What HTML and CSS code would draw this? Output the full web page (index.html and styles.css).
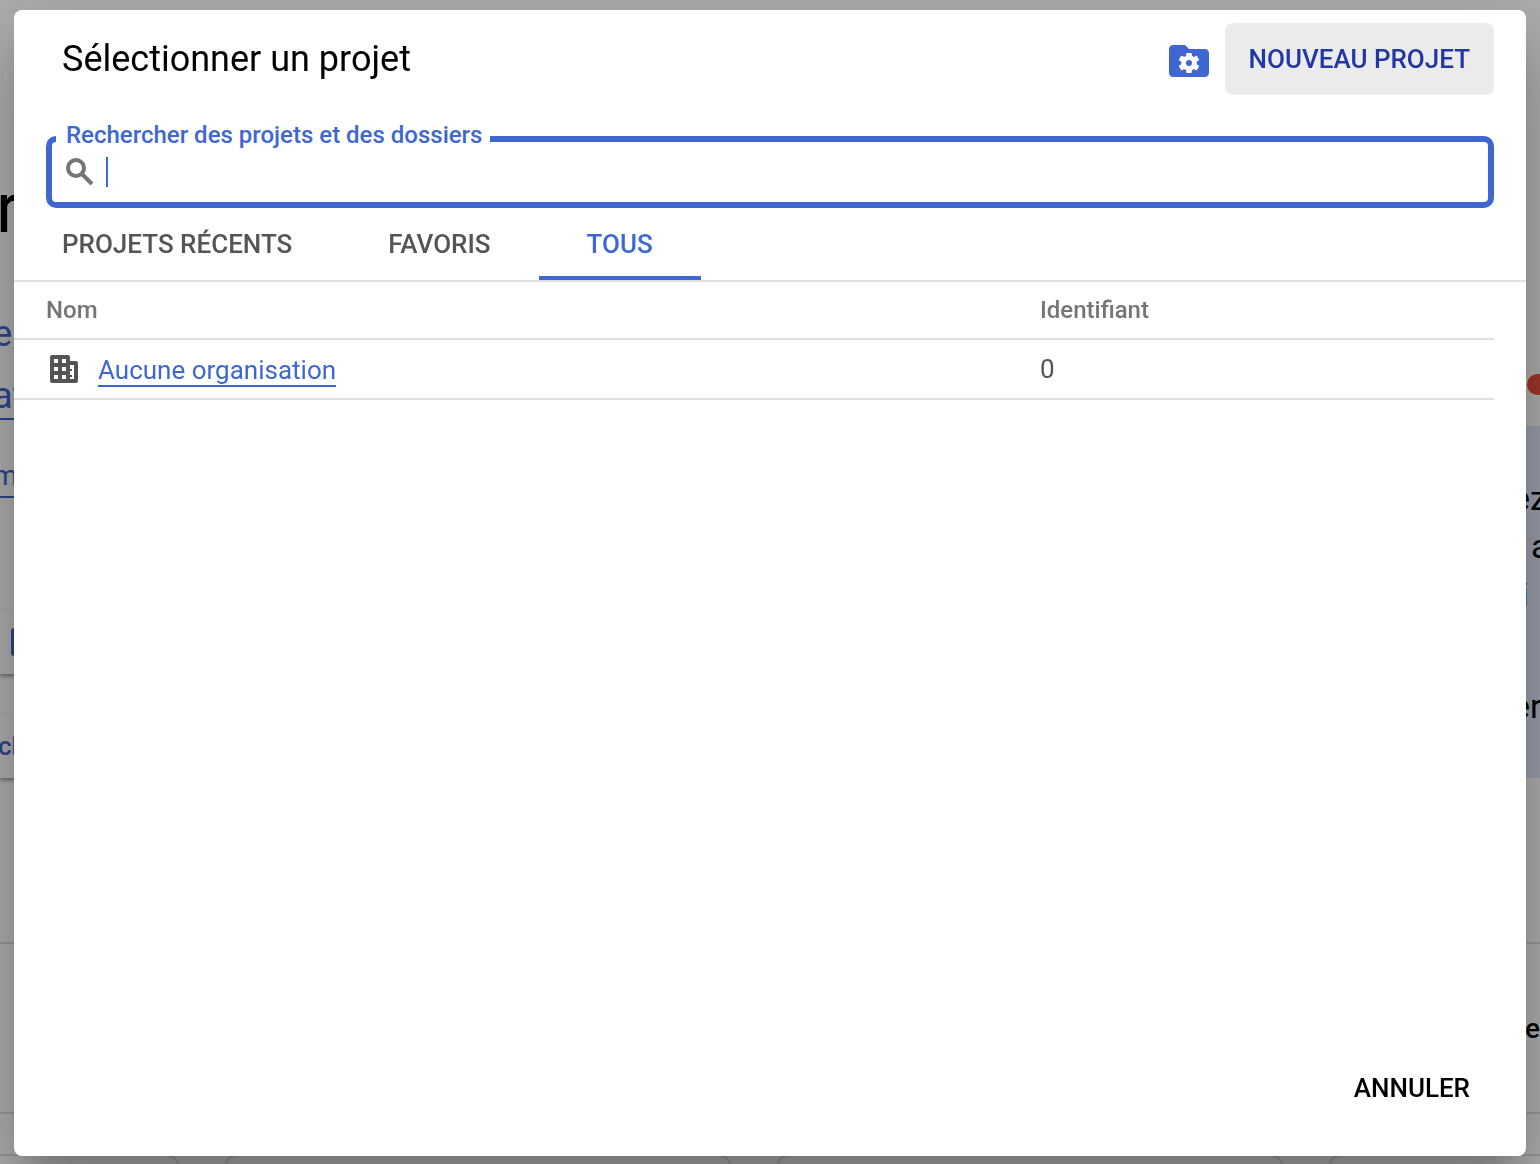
FILE: index.html
```html
<!DOCTYPE html>
<html lang="fr">
<head>
    <meta charset="UTF-8">
    <meta name="viewport" content="width=device-width, initial-scale=1.0">
    <title>Sélectionner un projet</title>
    <link rel="stylesheet" href="styles.css">
</head>
<body>
    <!-- Page behind the dialog -->
    <main class="page" aria-hidden="true">
        <section class="intro">
            <div class="intro-main">
                <p class="intro-title">r</p>
                <p class="intro-text">e</p>
                <p class="intro-text underlined">av</p>
                <p class="intro-small underlined">m</p>
                <div class="raised"><span class="raised-icon"></span></div>
                <div class="raised"><p>ch</p></div>
            </div>
            <div class="intro-side">
                <div class="dot"></div>
                <div class="notice">
                    <p>ez</p>
                    <p class="notice-word">a</p>
                    <p>&nbsp;i</p>
                    <p class="notice-last">er</p>
                </div>
            </div>
        </section>
        <section class="band">e</section>
        <section class="cards">
            <div class="card"></div>
            <div class="card"></div>
            <div class="card"></div>
            <div class="card"></div>
        </section>
    </main>

    <div class="backdrop">
        <div class="dialog" role="dialog" aria-labelledby="dialogTitle">
            <header class="dialog-header">
                <h1 id="dialogTitle">Sélectionner un projet</h1>
                <button type="button" class="icon-button" aria-label="Gérer les ressources">
                    <svg width="48" height="48" viewBox="0 0 24 24">
                        <path fill="#3f67d2" d="M20 6h-8l-2-2H4c-1.100 0-2 .9-2 2v12c0 1.100.9 2 2 2h16c1.100 0 2-.9 2-2V8c0-1.100-.9-2-2-2z"/>
                        <g fill="#fff" transform="translate(12 13)">
                            <circle r="3.900"/>
                            <rect x="-1.400" y="-5" width="2.800" height="10" rx=".4"/>
                            <rect x="-1.400" y="-5.200" width="2.800" height="10.400" rx=".4" transform="rotate(60)"/>
                            <rect x="-1.400" y="-5.200" width="2.800" height="10.400" rx=".4" transform="rotate(120)"/>
                        </g>
                        <circle cx="12" cy="13" r="1.500" fill="#3f67d2"/>
                    </svg>
                </button>
                <button type="button" class="button new-project">NOUVEAU PROJET</button>
            </header>

            <div class="search">
                <label for="search">Rechercher des projets et des dossiers</label>
                <svg width="28" height="28" viewBox="0 0 28 28" fill="none" stroke="#757575" stroke-width="4">
                    <circle cx="10" cy="10" r="8"/>
                    <path d="M15 15l11 11"/>
                </svg>
                <span class="caret"></span>
                <input type="text" id="search">
            </div>

            <div class="tabs" role="tablist">
                <button type="button" class="tab" role="tab">PROJETS RÉCENTS</button>
                <button type="button" class="tab" role="tab">FAVORIS</button>
                <button type="button" class="tab active" role="tab" aria-selected="true">TOUS</button>
            </div>

            <div class="results">
                <table>
                    <thead>
                        <tr>
                            <th class="col-name">Nom</th>
                            <th>Identifiant</th>
                        </tr>
                    </thead>
                    <tbody>
                        <tr>
                            <td>
                                <div class="resource">
                                    <svg width="28" height="28" viewBox="0 0 28 28">
                                        <path fill="#555" d="M2 0h16q2 0 2 2v4h6q2 0 2 2v18q0 2-2 2H2q-2 0-2-2V2q0-2 2-2z"/>
                                        <path fill="#fff" d="M4 4h4v4H4zM12 4h4v4h-4zM4 12h4v4H4zM12 12h4v4h-4zM4 20h4v4H4zM12 20h4v4h-4zM20 10h4v14h-4v-2h2v-2h-2v-4h2v-2h-2z"/>
                                    </svg>
                                    <a href="#">Aucune organisation</a>
                                </div>
                            </td>
                            <td>0</td>
                        </tr>
                    </tbody>
                </table>
            </div>

            <footer class="dialog-footer">
                <button type="button" class="button">ANNULER</button>
            </footer>
        </div>
    </div>
</body>
</html>
```
FILE: styles.css
```css
* {
    box-sizing: border-box;
}

body {
    margin: 0;
    font-family: Roboto, Arial, sans-serif;
    color: #000;
    background-color: #fff;
}

h1, p {
    margin: 0;
    font-weight: 400;
}

button {
    font-family: inherit;
    border: none;
    background: none;
    padding: 0;
    cursor: pointer;
}

svg {
    display: block;
    flex-shrink: 0;
}

/* page behind */

.page {
    height: 100vh;
    overflow: hidden;
}

.intro {
    display: flex;
    justify-content: space-between;
    height: 944px;
    border-bottom: 2px solid #e0e0e0;
}

.intro-main {
    width: 40px;
    padding-top: 168px;
    color: #3f67d2;
}

.intro-main p {
    margin-left: -7px;
}

.intro-main .intro-title {
    margin-left: -4px;
    font-size: 70px;
    line-height: 80px;
    color: #000;
}

.intro-text {
    margin-top: 64px;
    font-size: 36px;
    line-height: 44px;
}

.underlined {
    margin-top: 18px;
    border-bottom: 2px solid #3f67d2;
}

.intro-small {
    margin-top: 36px;
    font-size: 28px;
    line-height: 40px;
}

.raised {
    display: flex;
    align-items: center;
    height: 64px;
    margin-top: 40px;
    font-size: 26px;
    box-shadow: 0 2px 4px rgba(0, 0, 0, 0.4);
}

.intro-main .raised p {
    margin-left: -2px;
    font-weight: 500;
}

.intro-small + .raised {
    margin-top: 112px;
}

.raised-icon {
    width: 28px;
    height: 28px;
    margin-left: 11px;
    border-radius: 3px;
    background-color: #3f67d2;
}

.intro-side {
    width: 28px;
    padding-top: 374px;
}

.dot {
    width: 40px;
    height: 21px;
    margin-left: 15px;
    border-radius: 11px;
    background-color: #e8503f;
}

.notice {
    height: 352px;
    margin-top: 31px;
    padding-top: 48px;
    font-size: 34px;
    line-height: 48px;
    white-space: nowrap;
    background-color: #e1e8fb;
}

.notice-word {
    padding-left: 19px;
}

.notice-last {
    margin-top: 64px;
}

.band {
    display: flex;
    align-items: center;
    justify-content: flex-end;
    height: 170px;
    border-bottom: 2px solid #e0e0e0;
    font-size: 28px;
    font-weight: 500;
}

.cards {
    display: flex;
    gap: 42px;
    margin-top: 40px;
    margin-left: -329px;
}

.card {
    flex: 0 0 510px;
    height: 200px;
    border: 2px solid #e0e0e0;
    border-radius: 16px;
}

/* dialog */

.backdrop {
    position: fixed;
    inset: 0;
    display: flex;
    padding: 10px 14px 8px;
    background-color: rgba(0, 0, 0, 0.32);
}

.dialog {
    flex: 1;
    display: flex;
    flex-direction: column;
    min-width: 0;
    border-radius: 8px;
    background-color: #fff;
    box-shadow: 0 22px 30px -14px rgba(0, 0, 0, 0.2),
        0 48px 76px 6px rgba(0, 0, 0, 0.14),
        0 18px 92px 16px rgba(0, 0, 0, 0.12);
}

.dialog-header {
    display: flex;
    align-items: center;
    padding: 13px 32px 0 48px;
}

.dialog-header h1 {
    flex: 1;
    font-size: 36px;
    line-height: 48px;
}

.icon-button {
    margin: 4px 12px 0 0;
}

.button {
    height: 72px;
    padding: 0 24px;
    border-radius: 8px;
    font-size: 26px;
    font-weight: 500;
    color: #000;
}

.new-project {
    color: #2236a5;
    background-color: #ebebeb;
}

.search {
    position: relative;
    display: flex;
    align-items: center;
    height: 72px;
    margin: 41px 32px 0;
    padding: 0 14px;
    border: 6px solid #3f67d2;
    border-radius: 10px;
}

.search label {
    position: absolute;
    top: -21px;
    left: 4px;
    padding: 0 8px 0 10px;
    font-size: 24px;
    font-weight: 500;
    line-height: 28px;
    color: #3f67d2;
    background-color: #fff;
}

.search input {
    flex: 1;
    min-width: 0;
    border: none;
    outline: none;
    padding: 0;
    font-family: inherit;
    font-size: 26px;
    background: none;
}

.caret {
    width: 2px;
    height: 30px;
    margin-left: 12px;
    background-color: #3f67d2;
}

.tabs {
    display: flex;
    border-bottom: 2px solid #e0e0e0;
}

.tab {
    height: 72px;
    padding: 4px 48px 0;
    border-bottom: 4px solid transparent;
    font-size: 26px;
    font-weight: 500;
    color: #555;
}

.tab.active {
    color: #3f67d2;
    border-bottom-color: #3f67d2;
}

.results {
    flex: 1;
    padding-right: 32px;
}

table {
    width: 100%;
    border-collapse: separate;
    border-spacing: 0;
}

th, td {
    padding: 0;
    text-align: left;
    border-bottom: 2px solid #e0e0e0;
}

th {
    height: 58px;
    font-size: 24px;
    font-weight: 500;
    color: #757575;
}

td {
    height: 60px;
    font-size: 26px;
    color: #555;
}

th:first-child, td:first-child {
    padding-left: 32px;
}

.col-name {
    width: 1026px;
}

.resource {
    display: flex;
    align-items: center;
    gap: 20px;
    padding-left: 4px;
}

.resource a {
    margin-top: 4px;
    border-bottom: 2px solid #3f67d2;
    line-height: 30px;
    color: #3f67d2;
    text-decoration: none;
}

.dialog-footer {
    display: flex;
    justify-content: flex-end;
    padding: 0 32px 32px;
}
```
